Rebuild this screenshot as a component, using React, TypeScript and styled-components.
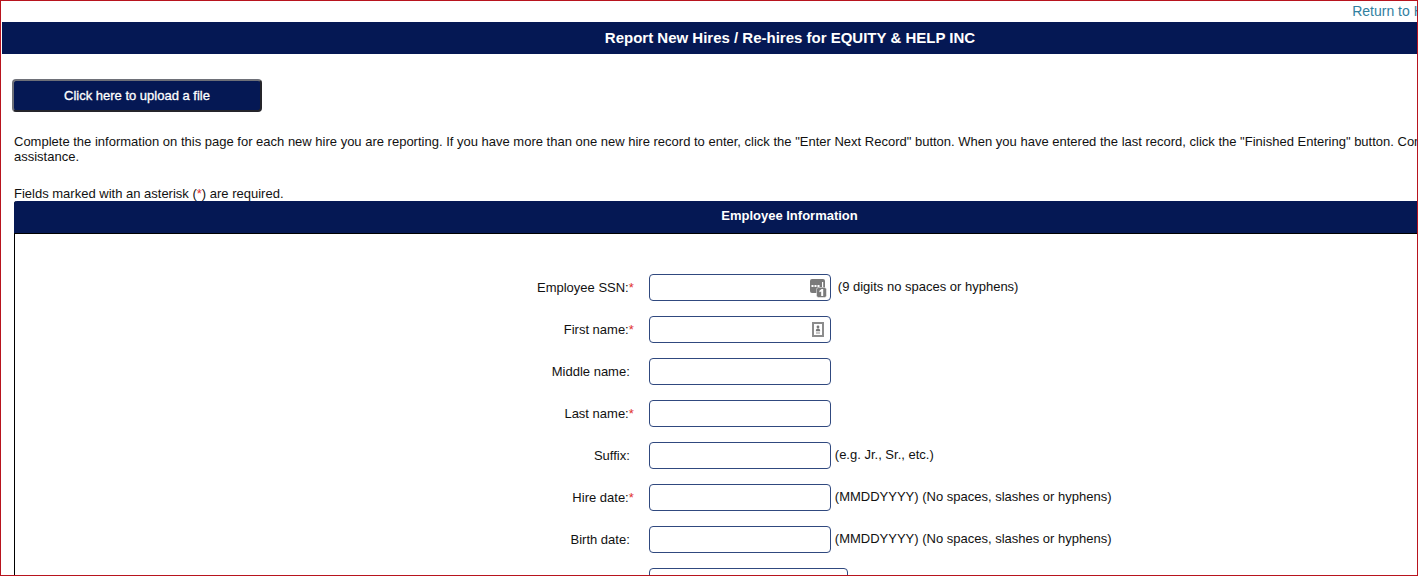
import React from "react";
import styled, { createGlobalStyle } from "styled-components";

const navy = "#051854";

const GlobalStyle = createGlobalStyle`
  * { box-sizing: border-box; }
  body {
    margin: 0;
    background: #fff;
    color: #111;
    font: 13px/15px "Liberation Sans", Arial, sans-serif;
  }
`;

const Frame = styled.div`
  height: 100vh;
  overflow: hidden;
  border: 1px solid #b8141e;
  padding-left: 1px;
`;

/* The sheet runs past the right edge of the frame and is clipped there. */
const Sheet = styled.div`
  width: calc(100% + 161px);
`;

const TopBar = styled.nav`
  display: flex;
  justify-content: flex-end;
  height: 21px;
  padding-right: 127px;
  align-items: flex-start;
`;

const HomeLink = styled.a`
  color: #31809f;
  font-size: 14px;
  line-height: 20px;
  text-decoration: none;
`;

const PageTitle = styled.h1`
  margin: 0;
  background: ${navy};
  color: #fff;
  font-size: 15px;
  line-height: 32px;
  text-align: center;
`;

const Content = styled.main`
  padding: 25px 12px 0;
`;

const UploadButton = styled.button`
  display: block;
  width: 250px;
  height: 33px;
  margin-left: -2px;
  border: 2px solid;
  border-color: #6e7078 #25252b #25252b #6e7078;
  border-radius: 4px;
  background: ${navy};
  color: #fff;
  font: 13px/15px "Liberation Sans", Arial, sans-serif;
  -webkit-text-stroke: 0.3px #fff;
`;

const Intro = styled.p`
  margin: 22px 0;
  white-space: nowrap;
`;

const Note = styled.p`
  margin: 0;
`;

const Star = styled.span`
  color: #e03030;
`;

const Panel = styled.section`
  border: 1px solid #000;
  border-top: 0;
  border-radius: 3px 3px 0 0;
`;

const PanelTitle = styled.h2`
  margin: 0 0 40px -1px;
  border-bottom: 1px solid #000;
  border-radius: 3px 3px 0 0;
  background: ${navy};
  color: #fff;
  font-size: 13px;
  line-height: 29px;
  padding-bottom: 3px;
  text-align: center;
`;

const Row = styled.div`
  display: grid;
  grid-template-columns: 40% 1fr;
  column-gap: 15px;
  align-items: center;
  margin-bottom: 15px;
  padding-right: 3px;
`;

const Label = styled.label<{ $required?: boolean }>`
  display: flex;
  justify-content: flex-end;
  padding-right: ${(p) => (p.$required ? 0 : 4)}px;
`;

const Field = styled.div`
  grid-column: 2;
  display: flex;
  align-items: center;
`;

const InputBox = styled.div`
  position: relative;
  width: 182px;
`;

const Input = styled.input`
  display: block;
  width: 100%;
  height: 27px;
  border: 1px solid #30497f;
  border-radius: 4px;
  background: #fff;
  padding: 0 8px;
  font: inherit;
`;

const Select = styled.select`
  width: 199px;
  height: 27px;
  border: 1px solid #30497f;
  border-radius: 4px;
  background: #fff;
  font: inherit;
`;

const BoxIcon = styled.span`
  position: absolute;
  top: 5px;
  right: 4px;
  display: flex;
`;

const Hint = styled.span<{ $wide?: boolean }>`
  padding: 0 0 2px ${(p) => (p.$wide ? 7 : 4)}px;
`;

const PasswordIcon = () => (
  <svg width="17" height="19" viewBox="0 0 17 19" aria-hidden="true">
    <rect x="0" y="0" width="15" height="14" rx="2" fill="#7a7a7a" />
    <path d="M1.500 6h2v2h-2zM4.500 6h2v2h-2zM7.500 6h2v2h-2zM12 3h1.200v5H12z" fill="#fff" />
    <rect x="6.500" y="8.500" width="10" height="10" rx="2" fill="#7a7a7a" stroke="#fff" strokeWidth="0.5" />
    <path d="M9.400 11.800L11.600 10h1.600v7h-2v-4.500l-1.800.8z" fill="#fff" />
  </svg>
);

const ContactIcon = () => (
  <svg width="17" height="19" viewBox="0 0 17 19" aria-hidden="true">
    <rect x="3" y="2" width="10" height="13" fill="#fff" stroke="#8c8c8c" strokeWidth="2" />
    <circle cx="8" cy="6" r="1.400" fill="#777" />
    <path d="M5.800 10.200C5.800 8 6.800 7.400 8 7.400s2.200.6 2.200 2.800z" fill="#777" />
    <path d="M6 12h4" stroke="#a0a0a0" strokeWidth="1.200" />
  </svg>
);

type FieldSpec = {
  id: string;
  label: string;
  required?: boolean;
  hint?: string;
  icon?: React.ReactNode;
};

const dateHint = "(MMDDYYYY) (No spaces, slashes or hyphens)";

const fields: FieldSpec[] = [
  { id: "ssn", label: "Employee SSN:", required: true, hint: "(9 digits no spaces or hyphens)", icon: <PasswordIcon /> },
  { id: "first", label: "First name:", required: true, icon: <ContactIcon /> },
  { id: "middle", label: "Middle name:" },
  { id: "last", label: "Last name:", required: true },
  { id: "suffix", label: "Suffix:", hint: "(e.g. Jr., Sr., etc.)" },
  { id: "hire", label: "Hire date:", required: true, hint: dateHint },
  { id: "birth", label: "Birth date:", hint: dateHint },
];

export default function App() {
  return (
    <Frame>
      <GlobalStyle />
      <Sheet>
        <TopBar>
          <HomeLink href="#home">Return to Home</HomeLink>
        </TopBar>
        <PageTitle>Report New Hires / Re-hires for EQUITY &amp; HELP INC</PageTitle>
        <Content>
          <UploadButton type="button">Click here to upload a file</UploadButton>
          <Intro>
            Complete the information on this page for each new hire you are reporting. If you have more than one new
            hire record to enter, click the "Enter Next Record" button. When you have entered the last record, click the
            "Finished Entering" button. Contact us for
            <br />
            assistance.
          </Intro>
          <Note>
            Fields marked with an asterisk (<Star>*</Star>) are required.
          </Note>
          <Panel>
            <PanelTitle>Employee Information</PanelTitle>
            {fields.map((f) => (
              <Row key={f.id}>
                <Label htmlFor={f.id} $required={f.required}>
                  {f.label}
                  {f.required && <Star>*</Star>}
                </Label>
                <Field>
                  <InputBox>
                    <Input id={f.id} type="text" />
                    {f.icon && <BoxIcon>{f.icon}</BoxIcon>}
                  </InputBox>
                  {f.hint && <Hint $wide={!!f.icon}>{f.hint}</Hint>}
                </Field>
              </Row>
            ))}
            <Row>
              <Field>
                <Select aria-label="State of hire" />
              </Field>
            </Row>
          </Panel>
        </Content>
      </Sheet>
    </Frame>
  );
}
